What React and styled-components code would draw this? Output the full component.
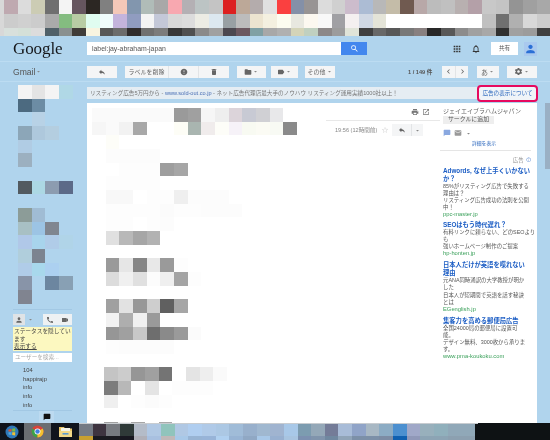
import styled, { createGlobalStyle } from "styled-components"
import {
  MdApps, MdCall, MdChatBubble, MdDelete, MdEmail, MdError, MdFolder, MdInfoOutline, MdLabel,
  MdKeyboardArrowLeft, MdKeyboardArrowRight, MdNotificationsNone, MdPerson, MdPrint, MdReply,
  MdSearch, MdSettings, MdStarBorder, MdVideocam, MdOpenInNew, MdArrowDropDown,
} from "react-icons/md"

const TILE = 13.67
const JP = `"Liberation Sans", "Noto Sans CJK JP", sans-serif`

const GlobalStyle = createGlobalStyle`
  html, body { margin: 0; padding: 0; background: #b0d4ed; }
  * { box-sizing: border-box; }
  body { font-family: ${JP}; overflow: hidden; }
`

const Page = styled.div`
  width: 550px;
  height: 440px;
  display: flex;
  flex-direction: column;
  overflow: hidden;
  background: #b0d4ed;
  filter: blur(0.3px);
`

const TileRow = styled.div`
  display: flex;
  flex: none;
  height: ${(p) => p.$h || TILE}px;
  padding-left: ${(p) => p.$indent || 0}px;
`

const Tile = styled.div`
  flex: none;
  width: ${TILE}px;
  height: 100%;
  background: ${(p) => p.$c};
`

const Tiles = ({ colors, h, indent }) => (
  <TileRow $h={h} $indent={indent}>
    {colors.map((c, i) => <Tile key={i} $c={c || "transparent"} />)}
  </TileRow>
)

const TopStrip = styled.div`
  flex: none;
  height: 36px;
  background: #d8d8d8;
  overflow: hidden;
`

const Header = styled.div`
  flex: none;
  height: 26px;
  display: flex;
  align-items: center;
  border-bottom: 1px solid #bcdcf2;
`

const Logo = styled.div`
  width: 87px;
  padding-left: 13px;
  font-family: "Liberation Serif", serif;
  font-size: 17px;
  color: #16181c;
  letter-spacing: -0.1px;
`

const SearchBox = styled.div`
  width: 254px;
  height: 13px;
  background: #fff;
  font-size: 6.9px;
  line-height: 13px;
  padding-left: 5px;
  color: #555;
`

const SearchButton = styled.div`
  width: 26px;
  height: 13px;
  background: #4387ee;
  color: #fff;
  display: flex;
  align-items: center;
  justify-content: center;
  font-size: 9px;
`

const HeaderTools = styled.div`
  margin-left: auto;
  width: 88px;
  margin-right: 13px;
  display: flex;
  align-items: center;
  color: #333;
  font-size: 10px;
  gap: 4.5px;
`

const ToolIcon = styled.div`
  width: 15px;
  display: flex;
  justify-content: center;
`

const ShareButton = styled.div`
  width: 27px;
  height: 13px;
  margin-left: 3px;
  background: #fff;
  font-size: 5.6px;
  line-height: 13px;
  text-align: center;
  color: #555;
`

const Avatar = styled.div`
  width: 13px;
  height: 14px;
  margin-left: 1.5px;
  background: #a9c9ee;
  color: #2a6fd6;
  font-size: 14px;
  display: flex;
  align-items: center;
  justify-content: center;
`

const Toolbar = styled.div`
  flex: none;
  height: 20px;
  display: flex;
  align-items: center;
  border-bottom: 1px solid #bcdcf2;
`

const GmailLabel = styled.div`
  width: 87px;
  padding-left: 13px;
  font-size: 8.6px;
  color: #555;
  display: flex;
  align-items: center;
`

const Btn = styled.div`
  flex: none;
  width: ${(p) => p.$w}px;
  height: 12px;
  margin-left: ${(p) => p.$gap || 0}px;
  background: #f4f5f6;
  color: #666;
  font-size: ${(p) => p.$size || 6}px;
  display: flex;
  align-items: center;
  justify-content: center;
  border-left: ${(p) => (p.$joined ? "1px solid #e2e4e6" : "none")};
  white-space: nowrap;
`

const Count = styled.div`
  width: 30px;
  margin-left: 73px;
  font-size: 5.6px;
  font-weight: 700;
  color: #555;
  white-space: nowrap;
`

const Content = styled.div`
  flex: 1;
  min-height: 0;
  display: flex;
`

const LeftNav = styled.div`
  width: 87px;
  flex: none;
  display: flex;
  flex-direction: column;
  padding-top: 3px;
`

const NavRule = styled.div`
  height: 1px;
  margin: ${(p) => p.$m};
  background: #a2c8e4;
`

const HangoutBar = styled.div`
  margin: 0 15px 2px 13px;
  height: 11px;
  display: flex;
  align-items: stretch;
  font-size: 8px;
  color: #666;
`

const HangoutBtn = styled.div`
  width: ${(p) => p.$w}px;
  margin-left: ${(p) => p.$gap || 0}px;
  background: ${(p) => p.$bg || "#eef1f3"};
  display: flex;
  align-items: center;
  justify-content: center;
`

const StatusBox = styled.div`
  margin: 0 15px 2px 13px;
  height: 24px;
  padding: 1px;
  background: #fcf8c0;
  font-size: 5.7px;
  line-height: 7.4px;
  color: #444;
  white-space: nowrap;
`

const ShowLink = styled.span`
  text-decoration: underline;
`

const UserSearch = styled.div`
  margin: 0 15px 4px 13px;
  height: 9px;
  background: #fff;
  font-size: 5.6px;
  line-height: 9px;
  padding-left: 2px;
  color: #aaa;
`

const Contact = styled.div`
  height: 8.6px;
  padding-left: 23px;
  font-size: 5.8px;
  line-height: 8.6px;
  color: #444;
`

const ChatTab = styled.div`
  width: 15px;
  height: 12px;
  margin-left: 39px;
  background: #bcdaf0;
  color: #111;
  font-size: 8px;
  display: flex;
  align-items: center;
  justify-content: center;
`

const Main = styled.div`
  width: 450px;
  flex: none;
  display: flex;
  flex-direction: column;
  padding-top: 5px;
`

const AdBar = styled.div`
  height: 12px;
  margin-bottom: 4px;
  padding-left: 3px;
  background: #e5edf3;
  font-size: 5.6px;
  line-height: 12px;
  color: #777;
  white-space: nowrap;
  position: relative;
`

const AdLink = styled.span`
  color: #4a6fb5;
`

const AdNotice = styled.div`
  position: absolute;
  right: -1px;
  top: -2px;
  width: 61px;
  height: 17px;
  border: 2.5px solid #e6095f;
  border-radius: 4px;
  background: #f0f4f8;
  color: #2a66bd;
  font-size: 5.6px;
  line-height: 12px;
  text-align: center;
`

const MailCard = styled.div`
  flex: 1;
  min-height: 0;
  display: flex;
  background: #fff;
  overflow: hidden;
`

const MailBody = styled.div`
  width: 239px;
  flex: none;
  padding: 5px 0 0 5px;
`

const MailMeta = styled.div`
  width: 114px;
  flex: none;
  padding-top: 5px;
`

const PrintRow = styled.div`
  height: 13px;
  display: flex;
  justify-content: flex-end;
  gap: 3px;
  padding-right: 10px;
  color: #777;
  font-size: 8px;
  border-bottom: 1px solid #e8e8e8;
`

const TimeRow = styled.div`
  display: flex;
  align-items: center;
  height: 12px;
  margin-top: 3px;
  padding-left: 9px;
  font-size: 5.6px;
  color: #888;
  white-space: nowrap;
`

const Star = styled.span`
  margin-left: 4px;
  color: #ddd;
  font-size: 8px;
  display: flex;
`

const Side = styled.div`
  width: 97px;
  flex: none;
  padding: 4px 6px 0 3px;
`

const SenderName = styled.div`
  font-size: 6px;
  line-height: 8px;
  color: #666;
  white-space: nowrap;
`

const CircleButton = styled.div`
  width: 51px;
  height: 7.5px;
  margin-top: 1px;
  background: #eee;
  color: #555;
  font-size: 5.9px;
  line-height: 7.5px;
  text-align: center;
`

const ContactIcons = styled.div`
  display: flex;
  align-items: center;
  gap: 3px;
  height: 9px;
  margin-top: 5px;
  color: #999;
  font-size: 8px;
`

const DetailLink = styled.div`
  margin-top: 2px;
  height: 8px;
  padding-right: 6px;
  text-align: center;
  color: #2a66bd;
  font-size: 4.8px;
  line-height: 8px;
`

const SideRule = styled.div`
  height: 1px;
  margin: 2px 0 0 -3px;
  background: #e5e5e5;
`

const AdHead = styled.div`
  display: flex;
  justify-content: flex-end;
  align-items: center;
  gap: 2px;
  height: 8px;
  margin-top: 5px;
  font-size: 5.4px;
  color: #888;
`

const AdBlock = styled.div`
  margin-top: ${(p) => p.$gap}px;
  white-space: nowrap;
`

const AdTitle = styled.div`
  font-size: 6.3px;
  line-height: 8px;
  font-weight: 700;
  color: #1a5cc4;
`

const AdLine = styled.div`
  font-size: 5.4px;
  line-height: 7.1px;
  color: #555;
`

const AdUrl = styled.div`
  font-size: 5.8px;
  line-height: 7.1px;
  color: #3aa05a;
`

const ScrollRail = styled.div`
  flex: 1;
  display: flex;
  justify-content: flex-end;
`

const ScrollThumb = styled.div`
  width: 5px;
  height: 66px;
  margin-top: 21px;
  background: #9ab0c4;
`

const Taskbar = styled.div`
  flex: none;
  height: 17px;
  display: flex;
  background: #0e1214;
`

const StartArea = styled.div`
  width: 79px;
  flex: none;
  display: flex;
  align-items: center;
  background: #10141c;
`

const TaskSlot = styled.div`
  width: ${(p) => p.$w}px;
  height: 100%;
  display: flex;
  align-items: center;
  justify-content: center;
  background: ${(p) => p.$bg || "transparent"};
`

const TaskTiles = styled.div`
  flex: none;
  width: 399px;
  display: flex;
  flex-direction: column;
  border-top: 1px solid #c8ccd0;
`

const topRows = [
  ["#bfa9b0", "#dcdcdc", "#ccccb4", "#6f6f6f", "#f4f4f4", "#66565f", "#2c2723", "#808080", "#f4c8b8", "#8296ae", "#b0bcb8", "#a8a8a8", "#f8a8b0", "#b4b0b4", "#bcc4c4", "#c4c4c4", "#dc2020", "#bca898", "#b4acac", "#e0e0e0", "#fa4040", "#8490a8", "#989494", "#dcdcdc", "#d0d0d0", "#ccbccc", "#acbcd4", "#b8b8b8", "#c4bca8", "#705a50", "#b8a8a8", "#bcbcbc", "#c0c0c0", "#b8b0b0", "#b4a0a8", "#c8c8c8", "#c4c4c4", "#949494", "#a0a0a0", "#a8a8a8"],
  ["#cccccc", "#d0d0d0", "#cccccc", "#aaaaaa", "#84bc80", "#b8cca4", "#e0fcf0", "#f0fcfc", "#c4b4dc", "#909cc0", "#f4f4f4", "#c4c8d8", "#d8d8d8", "#dcdcdc", "#ecece4", "#dce8f0", "#98a0a4", "#bcbcbc", "#ece4d0", "#f4f0e0", "#fcfcf0", "#e8e8e0", "#fcf8f0", "#f8f8f8", "#a0a0a4", "#f4f0f0", "#d0d8e4", "#e4e4d8", "#ffffff", "#ffffff", "#ffffff", "#ffffff", "#ffffff", "#ffffff", "#ffffff", "#c0c0c0", "#707070", "#b0b0b0", "#d8d8d8", "#cccccc"],
  ["#d8e0dc", "#d4e0d8", "#dcdcdc", "#506068", "#8a9090", "#403c38", "#f8f4e0", "#585858", "#6c6c6c", "#302c2c", "#707070", "#7c7c7c", "#383838", "#505050", "#8a8a8a", "#a0a0a0", "#4c4850", "#6c5860", "#80a0a4", "#a8a8a8", "#b0b0b0", "#d4d4b8", "#c0d0c0", "#8c8888", "#9c9c9c", "#e0e4d8", "#404040", "#686868", "#585858", "#787878", "#888080", "#282828", "#585858", "#8c8c8c", "#a0a0a0", "#a8a8a8", "#303030", "#a0a0a0", "#9c9c9c", "#404040"],
]

const navRows = [
  ["#f4f4f4", "#e4e4e4", "#f4f4f4", "#b0d8e6"],
  ["#4c6a80", "#6c8ca4"],
  ["", "#b8d2e6"],
  ["#8ca6b8", "#aec8dc", "#b4cee0"],
  ["#b0cce4"],
  ["#9cb0c0"],
  [],
  ["#525a60", "#acd8e4", "#8c9cb0", "#5c6a88"],
  [],
  ["#8c9c98", "#a0bcd4"],
  ["#a8c0c4", "#9cc4e4", "#808690"],
  ["#b0c8e8", "#a8d4ec", "#b0cce8", "#b0d4e8"],
  ["#b0cedc", "#7c8490"],
  ["#b0cce8", "#a8d8ec", "#acd0f0"],
  ["#8894a8", "", "#6c86a0", "#88a0b4"],
  ["#808490"],
]

const g1 = "#fafafa"
const bodyRows = [
  [g1, g1, g1, g1, g1, g1, "#9a9a9a", "#a0a0a0", "#f6f6f6", "#eeeeee", "#dcd4da", "#c8cad4", "#d0d0d4", "#e8e8ea"],
  ["#f6f6f6", "#fafafa", "#f2f2f2", "#a8a8a8", "#fff", "#fff", "#fdfdf6", "#a9b5b0", "#f0ecec", "#fdfdf8", "#f6f2f8", "#f8faf2", "#fbfbf4", "#f8faf4", "#8a8a8a"],
  ["", "#fdfdf8"],
  ["", "#fcfcfc", "#fcfcfc", "#fcfcfc", "#fcfcfc"],
  ["", "", "#fdfdfd", "#fdfdfd", "#fdfdfd", "#9e9e9e", "#a6a6a6"],
  ["", "#fdfdfd", "#fdfdfd", "#fdfdfd", "#fdfdfd"],
  ["", "#f8f8f8", "#f8f8f8", "#fff", "#fdfdfd", "#fdfdfd", "#efefef", "#fcfcfc", "#fcfcfc", "#fcfcfc"],
  ["", "#fdfdfd", "#fdfdfd", "#fdfdfd", "#fdfdfd", "#fbfbfb", "#fdfdfd", "#fdfdfd", "#fcfcfc", "#fcfcfc", "#fcfcfc"],
  ["", "#fdfdfd", "#fdfdfd", "#fff", "#fdfdfd", "#fcfcfc"],
  ["", "#e0e0e0", "#b8b8b8", "#a6a6a6", "#b2b2b2"],
  [],
  ["", "#9a9a9a", "#e6e6e6", "#868686", "#e8e8e8", "#9a9a9a", "#fdfdfd"],
  ["", "#dcdcdc", "#f0f0f0", "#e0e0e0", "#fcfcfc", "#efefef", "#a4a4a4", "#fdfdfd"],
  [],
  ["", "#a0a0a0", "#e2e2e2", "#989898", "#cecece", "#606060", "#a6a6a6"],
  ["", "#f2f2f2", "#aeaeae", "#f0f0f0", "#9a9a9a"],
  ["", "#969696", "#a0a0a0", "#c8c8c8", "#6e6e6e", "#8a8a8a", "#9a9a9a", "#fbfbfb"],
  ["", "#fdfdfd", "#fcfcfc", "#fcfcfc", "#fcfcfc", "#fcfcfc"],
  [],
]

const bodyRowsLower = [
  ["#c4c4c4", "#cccccc", "#969696", "#a0a0a0", "#747474", "", "#e4e4e4", "#eeeeee", "#fafafa"],
  ["#7c7c7c", "#b8b8b8", "", "#e4e4e4", "", "#fdfdfd", "#fdfdfd", "#fdfdfd"],
  ["#efefef", "", "#fdfdfd", "#fbfbfb", "#fdfdfd"],
  [],
  ["#a0a0a0", "#f0f0f0", "#a6a6a6", "", "#aaaaaa"],
]

const taskTop = ["#747a84", "#3e3440", "#777a80", "#2f3a38", "#b4bcc8", "#b0c8e4", "#90c4bc", "#b0c8e4", "#b0cef0", "#b0cae8", "#acc8e4", "#a0bcd8", "#98b0cc", "#a0b8d0", "#a0b4d0", "#a8c8e8", "#7c9cb0", "#94a8b8", "#747c98", "#a8bcd8", "#90a4c8", "#a8b8c4", "#8cacc4", "#4c90d0", "#a0a8c8", "#98b0bc", "#90b0bc", "#90a8b8", "#90a8b8"]
const taskBottom = ["#c8a030", "#1a1a20", "#1a1a20", "#181820", "#b0b0b8", "#a8c0e0", "#c0b8b8", "#a8c8e8", "#98b4d4", "#98b4d8", "#b0d0f0", "#98b4d4", "#90a8c4", "#a8c8e8", "#98b0d0", "#a8c4e0", "#7c90b0", "#8094ac", "#7088a0", "#90a4b8", "#7c90a8", "#7c90a8", "#7c8ca4", "#1060b0", "#9098b8", "#8ca4b4", "#8ca4b4", "#8ca0b0", "#8ca0b0"]

const ads = [
  { gap: 3, title: ["Adwords, なぜ上手くいかない", "か？"], lines: ["85%がリスティング広告で失敗する", "理由は？", "リスティング広告成功の法則を公開", "中！"], url: "ppc-master.jp" },
  { gap: 3, title: ["SEOはもう時代遅れ？"], lines: ["有料リンクに頼らない、どのSEOより", "も", "強いホームページ制作のご提案"], url: "hp-honten.jp" },
  { gap: 4, title: ["日本人だけが英語を喋れない", "理由"], lines: ["元ANA同時通訳の大学教授が明か", "した", "日本人が短期間で英語を話す秘訣", "とは"], url: "EGenglish.jp" },
  { gap: 4, title: ["集客力を高める郵便局広告"], lines: ["全国24000局の郵便局に設置可", "能。", "デザイン無料、3000枚から承りま", "す。"], url: "www.pma-koukoku.com" },
]

const StartOrb = () => (
  <svg width="14" height="14" viewBox="0 0 14 14">
    <circle cx="7" cy="7" r="6.5" fill="#2f78b8" />
    <path d="M3.5 4.5l3-.6v2.7h-3z" fill="#e0552e" />
    <path d="M7.2 3.8l3-.6v3.3h-3z" fill="#7cbc3c" />
    <path d="M3.5 7.2h3V10l-3-.6z" fill="#50a8e0" />
    <path d="M7.2 7.2h3v3.2l-3-.5z" fill="#f0c030" />
  </svg>
)

const ChromeIcon = () => (
  <svg width="13" height="13" viewBox="0 0 14 14">
    <circle cx="7" cy="7" r="6.5" fill="#d8443a" />
    <path d="M7 7L1.4 3.8A6.5 6.5 0 0 0 7 13.5z" fill="#3ba24a" />
    <path d="M7 7v6.5A6.5 6.5 0 0 0 12.6 3.8z" fill="#f2c230" />
    <circle cx="7" cy="7" r="3.2" fill="#fff" />
    <circle cx="7" cy="7" r="2.4" fill="#3f80e0" />
  </svg>
)

const FolderIcon = () => (
  <svg width="15" height="13" viewBox="0 0 15 13">
    <path d="M1 2h5l1 1.5h7V12H1z" fill="#e8c568" />
    <rect x="3" y="3" width="9" height="3.5" fill="#f4f4e8" />
    <path d="M1 6h13v6H1z" fill="#f2d888" />
    <rect x="4.5" y="8" width="6" height="1.6" fill="#5a9ad0" />
  </svg>
)

const Caret = styled(MdArrowDropDown)`
  font-size: 7px;
  color: #888;
`

const App = () => {
  return (
    <Page>
      <GlobalStyle />
      <TopStrip>
        <Tiles colors={topRows[0]} indent={4} h={14} />
        <Tiles colors={topRows[1]} indent={4} h={14} />
        <Tiles colors={topRows[2]} indent={4} h={8} />
      </TopStrip>

      <Header>
        <Logo>Google</Logo>
        <SearchBox>label:jay-abraham-japan</SearchBox>
        <SearchButton><MdSearch /></SearchButton>
        <HeaderTools>
          <ToolIcon><MdApps /></ToolIcon>
          <ToolIcon><MdNotificationsNone /></ToolIcon>
          <ShareButton>共有</ShareButton>
          <Avatar><MdPerson /></Avatar>
        </HeaderTools>
      </Header>

      <Toolbar>
        <GmailLabel>Gmail<Caret /></GmailLabel>
        <Btn $w={30} $size={8}><MdReply /></Btn>
        <Btn $w={43} $gap={8}>ラベルを削除</Btn>
        <Btn $w={30} $size={8} $joined><MdError /></Btn>
        <Btn $w={31} $size={8} $joined><MdDelete /></Btn>
        <Btn $w={29} $gap={8} $size={8}><MdFolder /><Caret /></Btn>
        <Btn $w={27} $gap={5} $size={8}><MdLabel /><Caret /></Btn>
        <Btn $w={30} $gap={7}>その他<Caret /></Btn>
        <Count>1 / 149 件</Count>
        <Btn $w={13} $gap={4} $size={9}><MdKeyboardArrowLeft /></Btn>
        <Btn $w={13} $size={9} $joined><MdKeyboardArrowRight /></Btn>
        <Btn $w={22} $gap={9} $size={7}>あ<Caret /></Btn>
        <Btn $w={30} $gap={8} $size={9}><MdSettings /><Caret /></Btn>
      </Toolbar>

      <Content>
        <LeftNav>
          {navRows.map((r, i) => <Tiles key={i} colors={r} indent={18} />)}
          <NavRule $m="5px 15px 5px 13px" />
          <HangoutBar>
            <HangoutBtn $w={12} $bg="#dfe3e6"><MdPerson /></HangoutBtn>
            <HangoutBtn $w={10} $bg="transparent"><Caret /></HangoutBtn>
            <HangoutBtn $w={14} $gap={8}><MdCall /></HangoutBtn>
            <HangoutBtn $w={15}><MdVideocam /></HangoutBtn>
          </HangoutBar>
          <StatusBox>
            ステータスを隠してい<br />ます<br /><ShowLink>表示する</ShowLink>
          </StatusBox>
          <UserSearch>ユーザーを検索...</UserSearch>
          <Contact>104</Contact>
          <Contact>happirajp</Contact>
          <Contact>info</Contact>
          <Contact>info</Contact>
          <Contact>info</Contact>
          <NavRule $m="1px 15px 0 13px" />
          <ChatTab><MdChatBubble /></ChatTab>
        </LeftNav>

        <Main>
          <AdBar>
            リスティング広告5万円から - <AdLink>www.sold-out.co.jp</AdLink> - ネット広告代理店最大手のノウハウ リスティング運用実績1000社以上！
            <AdNotice>広告の表示について</AdNotice>
          </AdBar>
          <MailCard>
            <MailBody>
              {bodyRows.map((r, i) => <Tiles key={i} colors={r} />)}
              {bodyRowsLower.map((r, i) => <Tiles key={i} colors={r} indent={12} />)}
            </MailBody>
            <MailMeta>
              <PrintRow><MdPrint /><MdOpenInNew /></PrintRow>
              <TimeRow>
                19:56 (12時間前)
                <Star><MdStarBorder /></Star>
                <Btn $w={19} $gap={3} $size={8}><MdReply /></Btn>
                <Btn $w={12} $size={8} $joined><Caret /></Btn>
              </TimeRow>
            </MailMeta>
            <Side>
              <SenderName>ジェイエイブラハムジャパン</SenderName>
              <CircleButton>サークルに追加</CircleButton>
              <ContactIcons>
                <MdChatBubble color="#8aa8e0" />
                <MdEmail />
                <Caret />
              </ContactIcons>
              <DetailLink>詳細を表示</DetailLink>
              <SideRule />
              <AdHead>広告 <MdInfoOutline color="#5a8ad0" /></AdHead>
              {ads.map((ad) => (
                <AdBlock key={ad.url} $gap={ad.gap}>
                  {ad.title.map((t) => <AdTitle key={t}>{t}</AdTitle>)}
                  {ad.lines.map((l) => <AdLine key={l}>{l}</AdLine>)}
                  <AdUrl>{ad.url}</AdUrl>
                </AdBlock>
              ))}
            </Side>
          </MailCard>
        </Main>

        <ScrollRail><ScrollThumb /></ScrollRail>
      </Content>

      <Taskbar>
        <StartArea>
          <TaskSlot $w={24}><StartOrb /></TaskSlot>
          <TaskSlot $w={27} $bg="#6a6e72"><ChromeIcon /></TaskSlot>
          <TaskSlot $w={28}><FolderIcon /></TaskSlot>
        </StartArea>
        <TaskTiles>
          <Tiles colors={taskTop} h={12} />
          <Tiles colors={taskBottom} h={4} />
        </TaskTiles>
      </Taskbar>
    </Page>
  )
}

export default App
